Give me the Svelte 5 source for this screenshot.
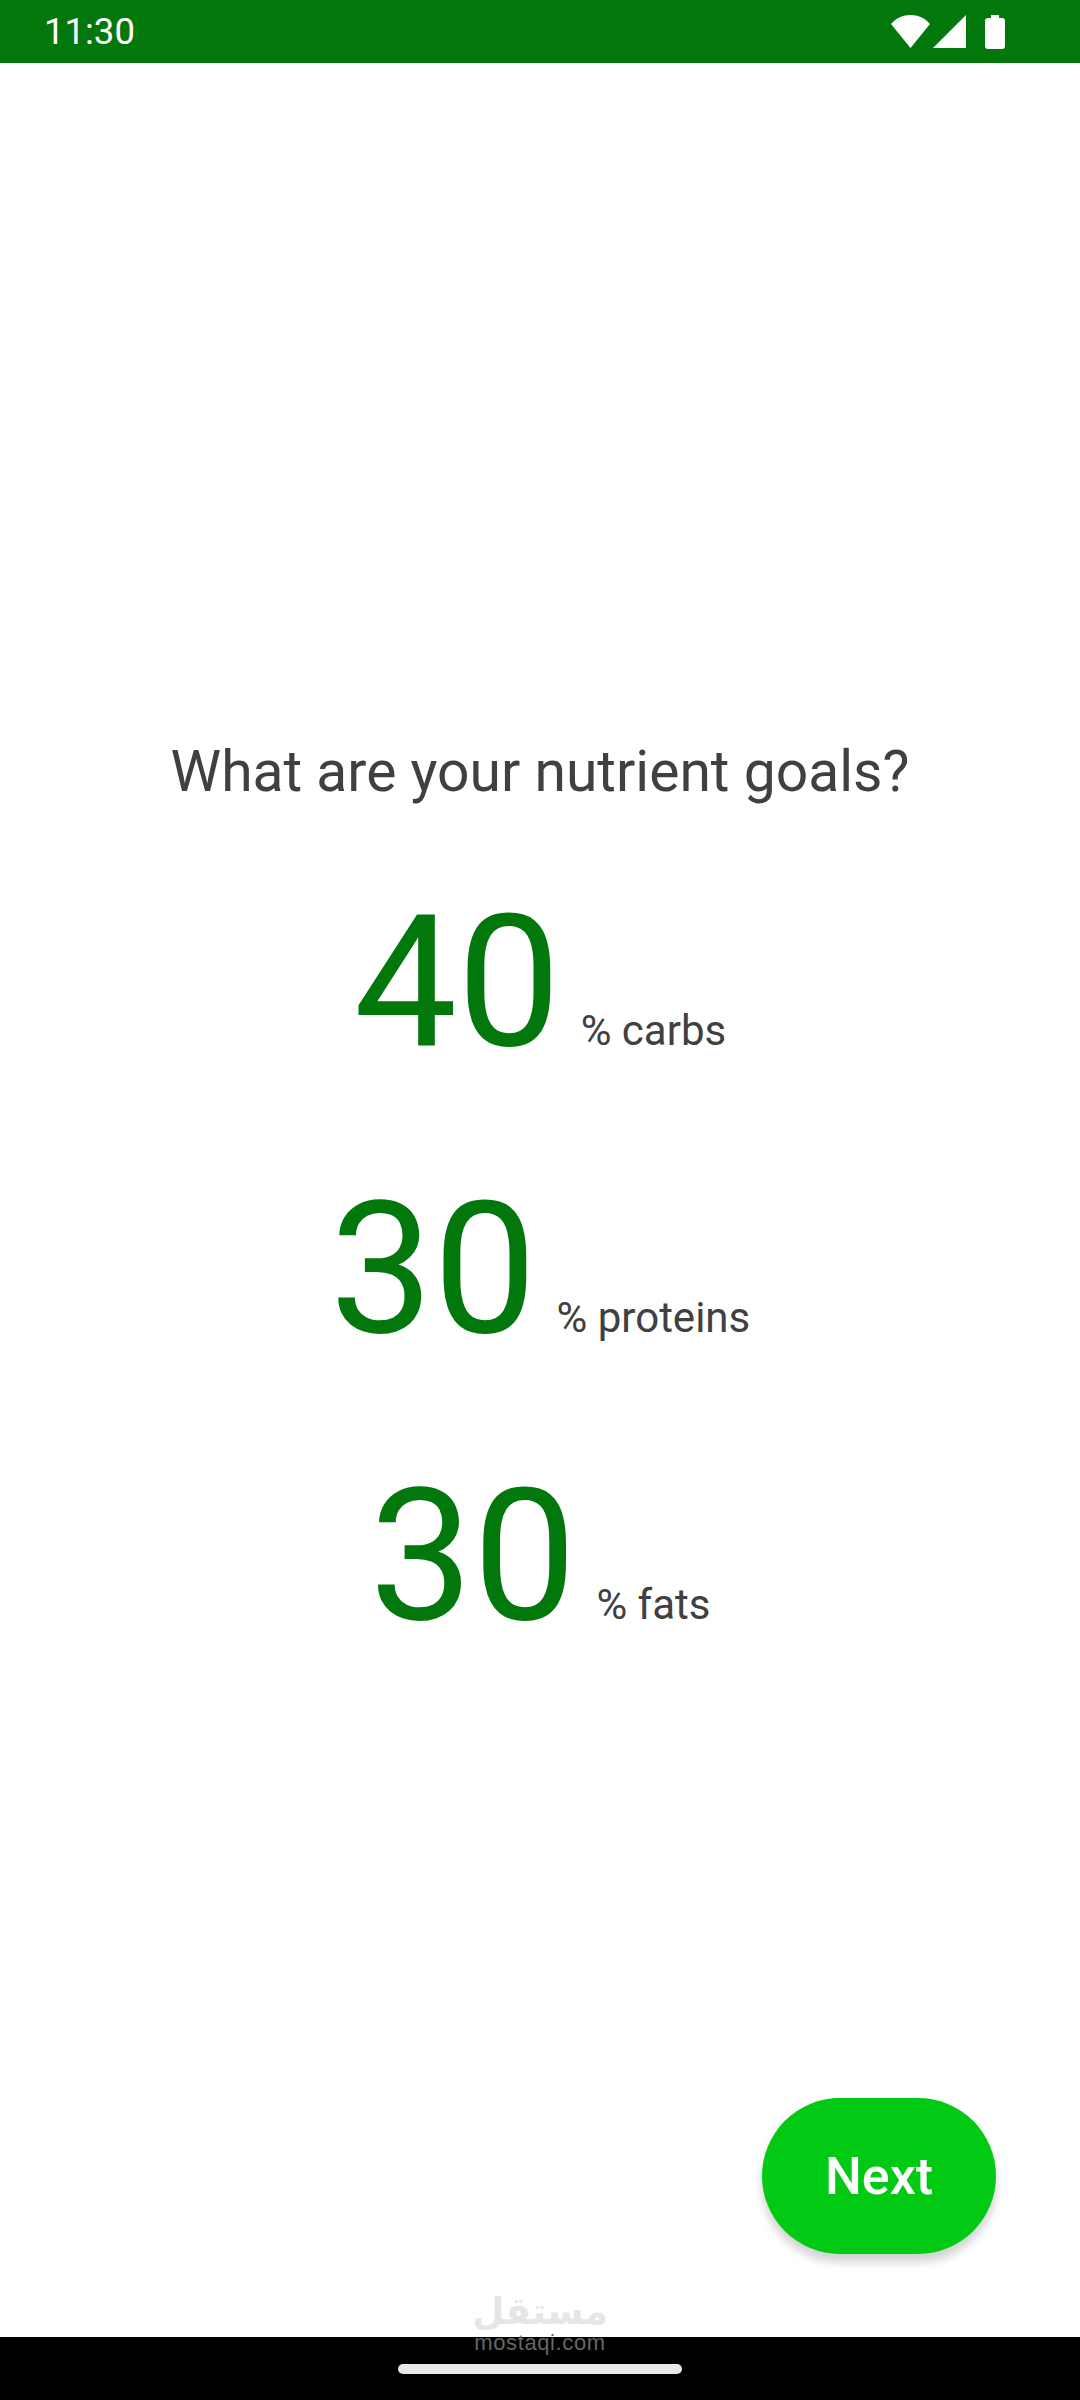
<script>
	const goals = [
		{ value: 40, label: '% carbs' },
		{ value: 30, label: '% proteins' },
		{ value: 30, label: '% fats' }
	]
</script>

<div class="screen">
	<header class="statusBar">
		<span class="time">11:30</span>
		<div class="statusIcons">
			<svg width="39" height="33" viewBox="0 0 39 33"><path d="M0 9C5 3 12 0 19.5 0S34 3 39 9L19.5 33Z" fill="#fff" /></svg>
			<svg width="33" height="33" viewBox="0 0 33 33"><path d="M33 0V33H0Z" fill="#fff" /></svg>
			<svg width="20" height="34" viewBox="0 0 20 34"><path d="M6 0H14V3H17Q20 3 20 6V31Q20 34 17 34H3Q0 34 0 31V6Q0 3 3 3H6Z" fill="#fff" /></svg>
		</div>
	</header>

	<main class="content">
		<h1>What are your nutrient goals?</h1>
		<div class="goals">
			{#each goals as goal}
				<div class="goal">
					<span class="value">{goal.value}</span>
					<span class="label">{goal.label}</span>
				</div>
			{/each}
		</div>
		<button class="next">Next</button>
	</main>

	<footer class="navBar">
		<div class="handle"></div>
	</footer>

	<div class="watermark">
		<span class="wmArabic" dir="rtl">مستقل</span>
		<span class="wmLatin">mostaqi.com</span>
	</div>
</div>

<style>
	:global(body) {
		margin: 0;
		background: #fff;
	}

	.screen {
		position: relative;
		display: flex;
		flex-direction: column;
		width: 1080px;
		height: 2400px;
		overflow: hidden;
		font-family: Roboto, "Liberation Sans", sans-serif;
		background: #fff;
	}

	.statusBar {
		display: flex;
		align-items: center;
		justify-content: space-between;
		height: 63px;
		padding: 0 75px 0 44px;
		background: #02770c;
		color: #fff;
	}

	.time {
		font-size: 36.5px;
	}

	.statusIcons {
		display: flex;
		align-items: center;
		gap: 3px;
	}

	.statusIcons svg:last-child {
		margin-left: 16px;
	}

	.content {
		position: relative;
		flex: 1;
		display: flex;
		flex-direction: column;
		align-items: center;
		padding-top: 677px;
	}

	h1 {
		margin: 0;
		font-size: 57px;
		font-weight: 400;
		line-height: 64px;
		color: #404040;
	}

	.goals {
		display: flex;
		flex-direction: column;
		align-items: center;
		gap: 72px;
		margin-top: 71px;
	}

	.goal {
		display: flex;
		align-items: baseline;
		gap: 20px;
		height: 215px;
	}

	.value {
		font-size: 184px;
		line-height: 215px;
		color: #02770c;
	}

	.label {
		font-size: 42px;
		color: #404040;
	}

	.next {
		position: absolute;
		right: 84px;
		bottom: 83px;
		width: 234px;
		height: 156px;
		padding: 0;
		border: none;
		border-radius: 78px;
		background: #02c914;
		box-shadow: 0 8px 10px rgba(0, 0, 0, 0.18);
		color: #fff;
		font-family: inherit;
		font-size: 52px;
		font-weight: 500;
	}

	.navBar {
		display: flex;
		justify-content: center;
		height: 63px;
		padding-top: 27px;
		box-sizing: border-box;
		background: #000;
	}

	.handle {
		width: 284px;
		height: 10px;
		border-radius: 5px;
		background: #e8e8e8;
	}

	.watermark {
		position: absolute;
		left: 474px;
		top: 2290px;
		width: 132px;
		display: flex;
		flex-direction: column;
		align-items: center;
	}

	.wmArabic {
		font-family: "DejaVu Sans", sans-serif;
		font-size: 37px;
		font-weight: 700;
		line-height: 44px;
		color: #e6e6e6;
	}

	.wmLatin {
		font-family: "Liberation Sans", sans-serif;
		font-size: 22px;
		letter-spacing: 0.6px;
		line-height: 18px;
		white-space: nowrap;
		color: #666;
	}
</style>
